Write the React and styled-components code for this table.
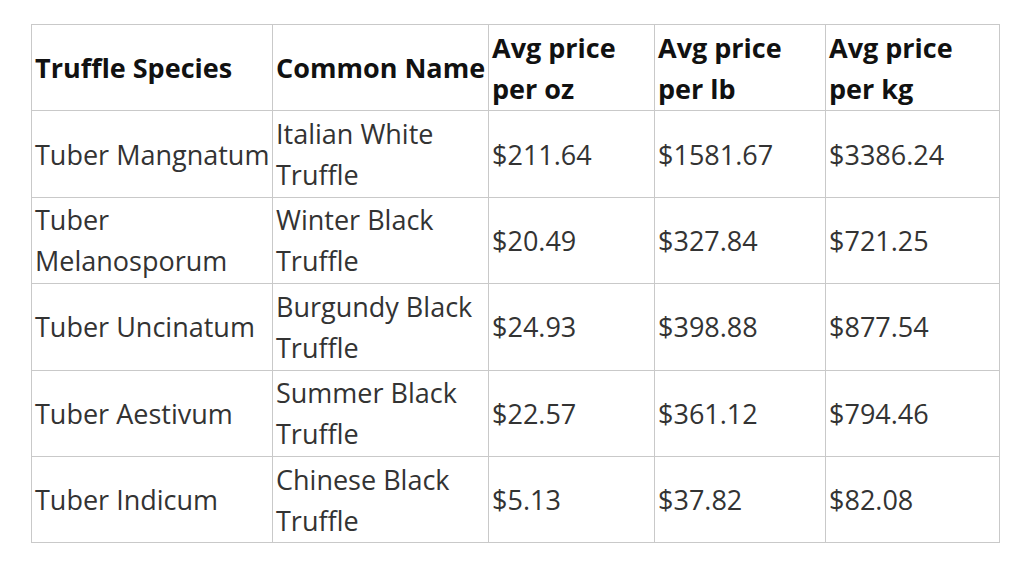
import React from "react";
import styled, { createGlobalStyle } from "styled-components";

const Global = createGlobalStyle`
  html, body { margin: 0; padding: 0; background: #fff; }
  body { font-family: "Open Sans", "Noto Sans", sans-serif; }
`;

const Page = styled.div`
  padding: 24px 0 0 31px;
`;

const Table = styled.table`
  border-collapse: collapse;
  table-layout: fixed;
  width: 969px;
  font-size: 27px;
  line-height: 41px;
  color: #333;
`;

const Row = styled.tr`
  height: 86.4px;
`;

const Cell = styled.td`
  border: 1px solid #c9c9c9;
  padding: 0 0 0 3px;
  vertical-align: middle;
  text-align: left;
  box-sizing: border-box;
`;

const Head = styled(Cell).attrs({ as: "th" })`
  font-weight: 700;
  color: #111;
`;

const widths = [241, 216, 166, 171, 174];

const headers = ["Truffle Species", "Common Name", "Avg price per oz", "Avg price per lb", "Avg price per kg"];

const rows = [
  ["Tuber Mangnatum", "Italian White Truffle", "$211.64", "$1581.67", "$3386.24"],
  ["Tuber Melanosporum", "Winter Black Truffle", "$20.49", "$327.84", "$721.25"],
  ["Tuber Uncinatum", "Burgundy Black Truffle", "$24.93", "$398.88", "$877.54"],
  ["Tuber Aestivum", "Summer Black Truffle", "$22.57", "$361.12", "$794.46"],
  ["Tuber Indicum", "Chinese Black Truffle", "$5.13", "$37.82", "$82.08"],
];

export default function App() {
  return (
    <Page>
      <Global />
      <Table>
        <colgroup>
          {widths.map((w, i) => (
            <col key={i} style={{ width: w }} />
          ))}
        </colgroup>
        <thead>
          <Row>
            {headers.map((h) => (
              <Head key={h}>{h}</Head>
            ))}
          </Row>
        </thead>
        <tbody>
          {rows.map((r) => (
            <Row key={r[0]}>
              {r.map((c, i) => (
                <Cell key={i}>{c}</Cell>
              ))}
            </Row>
          ))}
        </tbody>
      </Table>
    </Page>
  );
}
